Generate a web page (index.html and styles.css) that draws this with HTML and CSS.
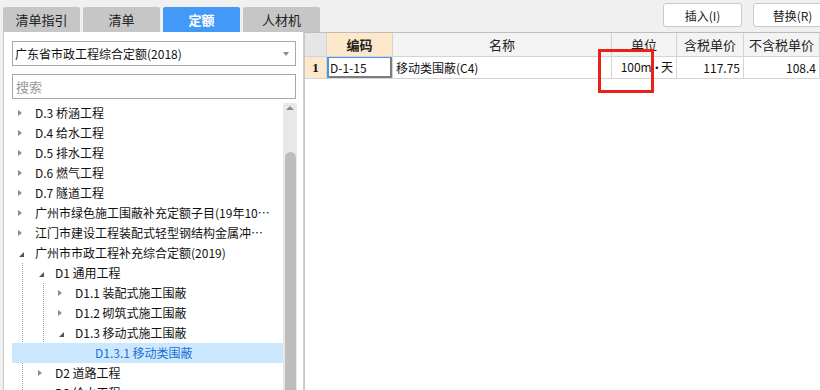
FILE: index.html
```html
<!DOCTYPE html>
<html lang="zh-CN">
<head>
<meta charset="utf-8">
<title>定额</title>
<link rel="stylesheet" href="styles.css">
</head>
<body>
<div class="app">
  <div class="topbar">
    <div class="tabs">
      <div class="tab">清单指引</div>
      <div class="tab">清单</div>
      <div class="tab active">定额</div>
      <div class="tab">人材机</div>
    </div>
    <div class="actions">
      <button class="btn">插入(I)</button>
      <button class="btn last">替换(R)</button>
    </div>
  </div>
  <div class="main">
    <div class="panel">
      <div class="select"><span>广东省市政工程综合定额(2018)</span><i class="caret"></i></div>
      <div class="search">搜索</div>
      <div class="treebox">
        <div class="tree">
          <div class="row"><i class="tw"><b class="arr"></b></i><span class="txt">D.3 桥涵工程</span></div>
          <div class="row"><i class="tw"><b class="arr"></b></i><span class="txt">D.4 给水工程</span></div>
          <div class="row"><i class="tw"><b class="arr"></b></i><span class="txt">D.5 排水工程</span></div>
          <div class="row"><i class="tw"><b class="arr"></b></i><span class="txt">D.6 燃气工程</span></div>
          <div class="row"><i class="tw"><b class="arr"></b></i><span class="txt">D.7 隧道工程</span></div>
          <div class="row"><i class="tw"><b class="arr"></b></i><span class="txt">广州市绿色施工围蔽补充定额子目(19年10月)</span></div>
          <div class="row"><i class="tw"><b class="arr"></b></i><span class="txt">江门市建设工程装配式轻型钢结构金属冲孔板围挡补充定额</span></div>
          <div class="row"><i class="tw"><b class="exp"></b></i><span class="txt">广州市市政工程补充综合定额(2019)</span></div>
          <div class="row lv1 g1"><i class="tw"><b class="exp"></b></i><span class="txt">D1 通用工程</span></div>
          <div class="row lv2 g2"><i class="tw"><b class="arr"></b></i><span class="txt">D1.1 装配式施工围蔽</span></div>
          <div class="row lv2 g2"><i class="tw"><b class="arr"></b></i><span class="txt">D1.2 砌筑式施工围蔽</span></div>
          <div class="row lv2 g2"><i class="tw"><b class="exp"></b></i><span class="txt">D1.3 移动式施工围蔽</span></div>
          <div class="row lv3 sel"><i class="tw"></i><span class="txt">D1.3.1 移动类围蔽</span></div>
          <div class="row lv1 g1"><i class="tw"><b class="arr"></b></i><span class="txt">D2 道路工程</span></div>
          <div class="row lv1 g1"><i class="tw"><b class="arr"></b></i><span class="txt">D3 给水工程</span></div>
        </div>
        <div class="scrollbar">
          <i class="sb-up"></i>
          <div class="sb-thumb"></div>
        </div>
      </div>
    </div>
    <div class="grid">
      <div class="gtable">
        <div class="c hd rn"></div>
        <div class="c hd act">编码</div>
        <div class="c hd">名称</div>
        <div class="c hd">单位</div>
        <div class="c hd">含税单价</div>
        <div class="c hd">不含税单价</div>

        <div class="c rn num">1</div>
        <div class="c cur">D-1-15</div>
        <div class="c">移动类围蔽(C4)</div>
        <div class="c r"><span class="unit">100m <b class="dot">·</b>天</span></div>
        <div class="c r">117.75</div>
        <div class="c r">108.4</div>
      </div>
      <div class="redbox"></div>
    </div>
  </div>
</div>
</body>
</html>
```
FILE: styles.css
```css
* { box-sizing: border-box; }
html, body { margin: 0; padding: 0; }
body {
  width: 820px;
  height: 390px;
  overflow: hidden;
  background: #f0f0f0;
  font-family: "Noto Sans CJK SC", "Noto Sans", sans-serif;
  font-size: 12px;
  color: #111;
}
.app { display: flex; flex-direction: column; height: 390px; }

.topbar {
  height: 32px;
  display: flex;
  flex-shrink: 0;
}
.tabs {
  display: flex;
  gap: 3px;
  padding-left: 3px;
  align-items: flex-end;
}
.tab {
  width: 77px;
  height: 25px;
  background: #c6c6c6;
  border-radius: 2px 2px 0 0;
  display: flex;
  align-items: center;
  justify-content: center;
  font-size: 13px;
  color: #222;
}
.tab.active { background: #4399f8; color: #fff; font-weight: bold; }

.actions {
  margin-left: auto;
  display: flex;
  gap: 11px;
  padding-top: 3px;
  margin-right: -12px;
}
.btn {
  width: 79px;
  height: 24px;
  background: #fff;
  border: 1px solid #c9c9c9;
  border-radius: 3px;
  font-family: "Noto Sans CJK SC", sans-serif;
  font-size: 12px;
  color: #222;
  padding: 0;
}

.main { flex: 1; display: flex; min-height: 0; }

.panel {
  margin-left: 3px;
  width: 301px;
  background: #fff;
  border-left: 1px solid #c8c8c8;
  border-right: 1px solid #d0d0d0;
  padding: 9px 6px 0 8px;
  display: flex;
  flex-direction: column;
}
.select {
  height: 25px;
  margin-right: 1px;
  border: 1px solid #a8a8a8;
  display: flex;
  align-items: center;
  padding-left: 2px;
  padding-right: 6px;
  line-height: 20px;
}
.select span { flex: 1; }
.caret {
  width: 0; height: 0;
  border-top: 4px solid #8a8a8a;
  border-left: 3px solid transparent;
  border-right: 3px solid transparent;
}
.search {
  height: 25px;
  margin-top: 8px;
  margin-right: 1px;
  border: 1px solid #a8a8a8;
  display: flex;
  align-items: center;
  padding-left: 3px;
  color: #9a9a9a;
  font-size: 13px;
}
.treebox {
  margin-top: 4px;
  flex: 1;
  display: flex;
  min-height: 0;
}
.tree { flex: 1; min-width: 0; overflow: hidden; }
.row {
  height: 20px;
  display: flex;
  align-items: center;
  padding-left: 6px;
  padding-right: 12px;
  white-space: nowrap;
  background-repeat: repeat-y;
}
.row.lv1 { padding-left: 26px; }
.row.lv2 { padding-left: 46px; }
.row.lv3 { padding-left: 66px; }
.row.g1 {
  background-image: linear-gradient(#9c9c9c 50%, transparent 50%);
  background-size: 1px 2px;
  background-position: 10px 0;
}
.row.g2 {
  background-image: linear-gradient(#9c9c9c 50%, transparent 50%), linear-gradient(#9c9c9c 50%, transparent 50%);
  background-size: 1px 2px, 1px 2px;
  background-position: 10px 0, 31px 0;
}
.row.sel { background: #cce8ff; color: #1d6fd6; }
.tw {
  width: 17px;
  height: 20px;
  flex-shrink: 0;
  display: flex;
  align-items: center;
}
.arr {
  width: 0; height: 0;
  border-left: 4px solid #8c8c8c;
  border-top: 3.5px solid transparent;
  border-bottom: 3.5px solid transparent;
}
.exp {
  width: 0; height: 0;
  margin-left: 1px;
  margin-top: 3px;
  border-bottom: 5px solid #555;
  border-left: 5px solid transparent;
}
.txt {
  flex: 1;
  min-width: 0;
  overflow: hidden;
  text-overflow: ellipsis;
  line-height: 20px;
}

.scrollbar {
  width: 14px;
  background: #e8e8e8;
  display: flex;
  flex-direction: column;
  align-items: center;
  flex-shrink: 0;
}
.sb-up {
  margin-top: 3px;
  width: 0; height: 0;
  border-bottom: 4px solid #8c8c8c;
  border-left: 4px solid transparent;
  border-right: 4px solid transparent;
}
.sb-thumb {
  margin-top: 42px;
  width: 11px;
  flex: 1;
  background: #bdbdbd;
  border-radius: 6px 6px 0 0;
}

.grid {
  flex: 1;
  position: relative;
  background: #fff;
  border-left: 1px solid #c8c8c8;
  border-top: 1px solid #bdbdbd;
}
.gtable {
  display: grid;
  grid-template-columns: 22px 66px 219px 65px 67px 1fr;
  grid-template-rows: 24px 22px;
}
.c {
  border-right: 1px solid #d4d4d4;
  border-bottom: 1px solid #d4d4d4;
  display: flex;
  align-items: center;
  padding: 0 3px;
  white-space: nowrap;
  overflow: hidden;
  line-height: 18px;
}
.c.hd { background: #f3f3f3; justify-content: center; font-size: 13px; color: #222; }
.c.hd.rn { background: #e6e6e6; }
.c.hd.act { background: #fde8cb; font-weight: bold; }
.c.rn.num {
  background: #fde8cb;
  justify-content: center;
  font-family: "Liberation Serif", serif;
  font-weight: bold;
  font-size: 13px;
}
.c.cur {
  box-shadow: inset 2px 0 #4a95e6, inset 0 1px #4a95e6, inset -2px -2px #7d7d7d;
}
.c.r { justify-content: flex-end; }
.unit { white-space: nowrap; }
.dot { font-weight: bold; font-family: "DejaVu Sans", sans-serif; margin-right: 2px; }

.redbox {
  position: absolute;
  left: 293px;
  top: 16px;
  width: 56px;
  height: 44px;
  border: 3px solid #e8221b;
}
```
